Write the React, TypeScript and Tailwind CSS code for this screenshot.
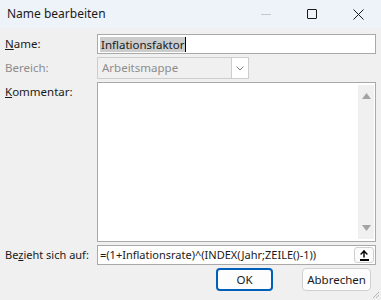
import { ArrowUp } from "lucide-react";

const font = { fontFamily: '"Noto Sans", "Open Sans", sans-serif' };

const TitleBar = () => (
  <div className="flex h-[31px] items-center bg-[#eef2f9] pl-[7px]">
    <span className="text-[12px] text-[#1a1a1a]">Name bearbeiten</span>
    <div className="ml-auto flex h-full items-center">
      {/* minimize (disabled) */}
      <div className="flex w-[46px] items-center justify-center">
        <div className="h-px w-[10px] bg-[#c4c8ce]" />
      </div>
      {/* maximize */}
      <div className="flex w-[46px] items-center justify-center">
        <div className="h-[10px] w-[10px] rounded-[1px] border border-[#1a1a1a]" />
      </div>
      {/* close */}
      <div className="flex w-[46px] items-center justify-center">
        <svg width="11" height="11" viewBox="0 0 11 11">
          <path d="M0.5 0.5 L10.5 10.5 M10.5 0.5 L0.5 10.5" stroke="#1a1a1a" strokeWidth="1" />
        </svg>
      </div>
    </div>
  </div>
);

const Label = ({ children, muted }: { children: React.ReactNode; muted?: boolean }) => (
  <div className={`w-[92px] shrink-0 whitespace-nowrap text-[11.5px] ${muted ? "text-[#8d8d8d]" : "text-[#1a1a1a]"}`}>
    {children}
  </div>
);

const Triangle = ({ down }: { down?: boolean }) => (
  <svg width="9" height="6" viewBox="0 0 9 6">
    <path d={down ? "M0 0 L9 0 L4.5 6 Z" : "M0 6 L9 6 L4.5 0 Z"} fill="#a3a3a3" />
  </svg>
);

export default function App() {
  return (
    <div className="flex h-[300px] w-[381px] flex-col overflow-hidden bg-[#f0f0f0]" style={font}>
      <TitleBar />

      <div className="flex flex-col gap-[3px] pl-[5px] pr-[5px] pt-[6px]">
        {/* Name */}
        <div className="flex items-center">
          <Label>
            <span className="underline">N</span>ame:
          </Label>
          <div className="flex h-[20px] flex-1 items-center border border-[#a9a9a9] bg-white pl-[2px]">
            <span className="bg-[#cccccc] px-[1px] text-[11.5px] leading-[15px] text-[#1a1a1a]">Inflationsfaktor</span>
            <span className="h-[15px] w-px bg-black" />
          </div>
        </div>

        {/* Bereich */}
        <div className="flex items-center">
          <Label muted>Bereich:</Label>
          <div className="flex h-[22px] w-[152px] items-center border border-[#cdcdcd] bg-[#f0f0f0]">
            <span className="flex-1 pl-[4px] text-[11.5px] text-[#8d8d8d]">Arbeitsmappe</span>
            <div className="flex h-full w-[17px] items-center justify-center border-l border-[#cdcdcd] bg-white">
              <svg width="8" height="5" viewBox="0 0 8 5">
                <path d="M0.5 0.5 L4 4 L7.5 0.5" stroke="#7a7a7a" fill="none" strokeWidth="1" />
              </svg>
            </div>
          </div>
        </div>

        {/* Kommentar */}
        <div className="flex items-start">
          <Label>
            <div className="pt-px">
              <span className="underline">K</span>ommentar:
            </div>
          </Label>
          <div className="flex h-[160px] flex-1 border border-[#a9a9a9] bg-white">
            <div className="flex-1" />
            <div className="my-[2px] mr-[1px] flex w-[16px] flex-col items-center justify-between bg-[#f0f0f0] py-[8px]">
              <Triangle />
              <Triangle down />
            </div>
          </div>
        </div>

        {/* Bezieht sich auf */}
        <div className="flex items-center">
          <Label>
            <span className="text-[11px]">
              Be<span className="underline">z</span>ieht sich auf:
            </span>
          </Label>
          <div className="flex h-[20px] flex-1 items-center border border-[#a9a9a9] bg-white pl-[2px] pr-[1px]">
            <span className="flex-1 whitespace-nowrap text-[11px] text-[#1a1a1a]">=(1+Inflationsrate)^(INDEX(Jahr;ZEILE()-1))</span>
            <div className="flex h-[16px] w-[20px] items-center justify-center rounded-[3px] border border-[#cfcfcf] bg-[#fbfbfb]">
              <div className="flex flex-col items-center">
                <ArrowUp className="h-[10px] w-[10px] text-black" strokeWidth={3.5} />
                <div className="h-[1.5px] w-[9px] bg-black" />
              </div>
            </div>
          </div>
        </div>

        {/* Buttons */}
        <div className="flex justify-end gap-[29px] pr-[5px]">
          <button className="h-[23px] w-[57px] rounded-[4px] border-2 border-[#005fb8] bg-[#fdfdfd] text-[11.5px] text-[#1a1a1a]">
            OK
          </button>
          <button className="h-[23px] w-[69px] rounded-[4px] border border-[#d0d0d0] bg-[#fdfdfd] text-[11.5px] text-[#1a1a1a]">
            Abbrechen
          </button>
        </div>
      </div>

      {/* resize grip */}
      <div className="mt-auto flex justify-end pb-px pr-px">
        <svg width="8" height="8" viewBox="0 0 8 8">
          <path d="M7 1 L1 7 M7 4 L4 7" stroke="#b5b5b5" strokeWidth="1" />
        </svg>
      </div>
    </div>
  );
}
